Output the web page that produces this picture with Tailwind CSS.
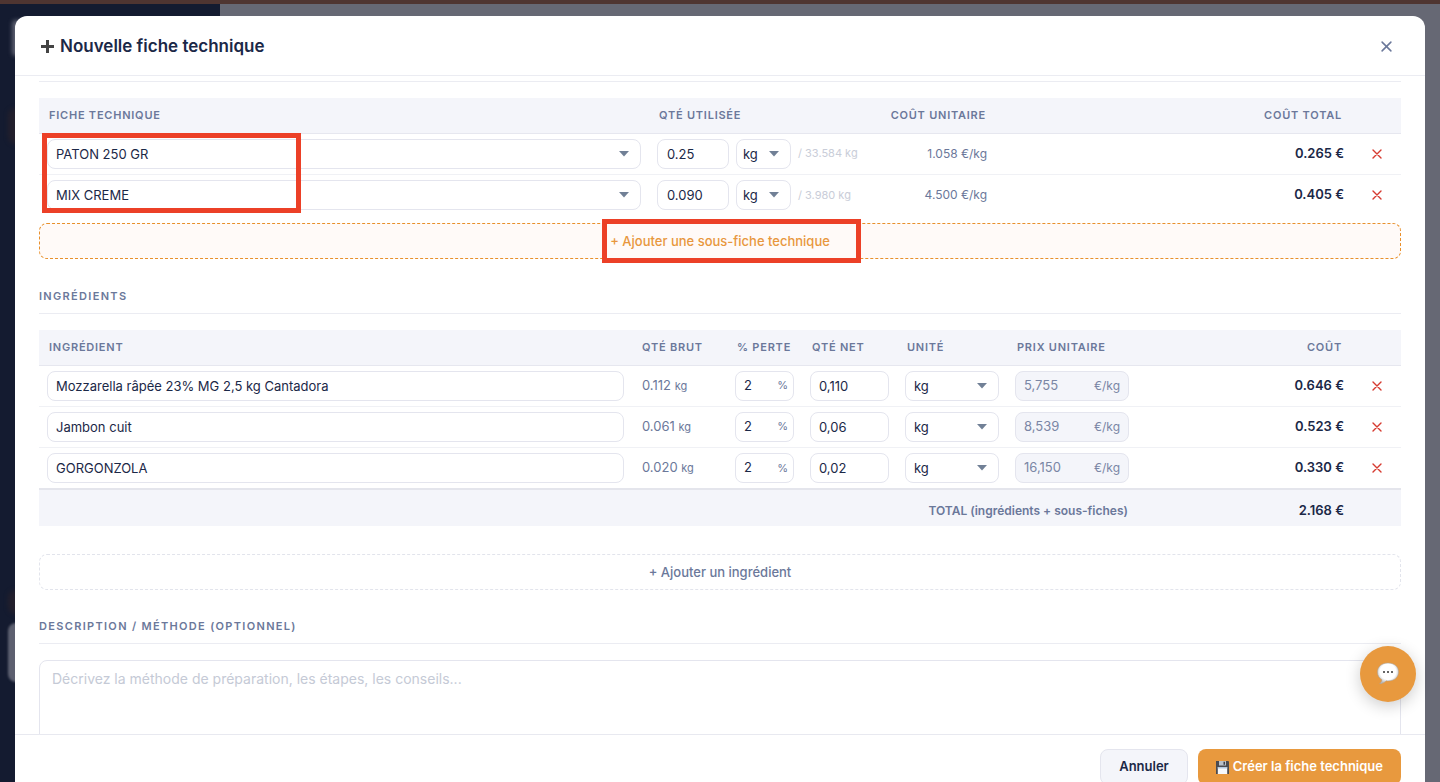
<!DOCTYPE html>
<html lang="fr">
<head>
<meta charset="utf-8">
<meta name="viewport" content="width=device-width, initial-scale=1">
<title>Nouvelle fiche technique</title>
<script src="https://cdn.jsdelivr.net/npm/@tailwindcss/browser@4"></script>
</head>
<body class="h-screen overflow-hidden bg-[#666874] font-['Inter',sans-serif] text-[13px] text-[#1b2847] antialiased">
<svg class="hidden" aria-hidden="true">
  <symbol id="caret" viewBox="0 0 10 6"><path d="M0 0h10L5 5.600z" fill="#718096"/></symbol>
  <symbol id="cross" viewBox="0 0 10 10"><path d="M1 1l8 8M9 1L1 9" fill="none" stroke="currentColor" stroke-width="1.400" stroke-linecap="round"/></symbol>
</svg>

<!-- Dimmed application behind the dialog -->
<div class="absolute inset-0 flex flex-col overflow-hidden" aria-hidden="true">
  <div class="h-1 shrink-0 bg-[#4f3531]"></div>
  <div class="flex flex-1">
    <div class="relative w-[220px] bg-[#141b30]">
      <div class="absolute left-3 top-4 h-9 w-10 rounded bg-[#5d6070] blur-[2px]"></div>
      <div class="absolute left-2 top-[104px] h-9 w-10 rounded-lg bg-[#221f2c] blur-[2px]"></div>
      <div class="absolute left-2 top-[586px] h-6 w-10 rounded-lg bg-[#221f2c] blur-[2px]"></div>
      <div class="absolute left-2 top-[619px] h-[59px] w-40 rounded-lg bg-[#5d6070] blur-[1px]"></div>
    </div>
  </div>
</div>

<div class="relative flex h-full px-[15px] pt-4">
<div role="dialog" aria-labelledby="title" class="relative flex min-w-0 flex-1 flex-col rounded-t-xl bg-white">
  <header class="flex h-[60px] shrink-0 items-center justify-between border-b border-[#ebecf2] pl-[26px] pr-8 pt-0.5">
    <h1 id="title" class="flex items-center gap-[6px] text-[17px] font-semibold">
      <svg class="size-[13px]" viewBox="0 0 13 13" aria-hidden="true"><path d="M6.500 0v13M0 6.500h13" stroke="#444" stroke-width="3"/></svg>
      Nouvelle fiche technique
    </h1>
    <button aria-label="Fermer" class="grid size-[14px] place-items-center text-[#6b789a]"><svg class="size-[11px]"><use href="#cross"/></svg></button>
  </header>

  <main class="min-h-0 flex-1 overflow-hidden px-6 pt-[5px]">
    <section class="relative border-t border-[#ebecf2] pt-4">
      <table class="w-full table-fixed border-collapse">
        <colgroup><col><col class="w-[231px]"><col class="w-[115px]"><col class="w-[357px]"><col class="w-[49px]"></colgroup>
        <thead>
          <tr class="h-[35px] border-b border-[#e6e7ef] bg-[#f4f5fa] text-[11px] tracking-[0.07em] text-[#6b789a]">
            <th class="px-[10px] text-left font-semibold">FICHE TECHNIQUE</th>
            <th class="px-[10px] text-left font-semibold">QTÉ UTILISÉE</th>
            <th class="whitespace-nowrap px-[9px] text-right font-semibold">COÛT UNITAIRE</th>
            <th class="px-[10px] text-right font-semibold">COÛT TOTAL</th>
            <th></th>
          </tr>
        </thead>
        <tbody>
          <tr class="h-[41px] border-b border-[#f0f1f5]">
            <td class="px-2"><div class="relative"><select aria-label="Fiche technique" class="block h-[30px] w-full appearance-none rounded-lg border border-[#e4e5ee] bg-white px-2 pt-0.5"><option>PATON 250 GR</option></select><svg class="pointer-events-none absolute right-3 top-3 h-[6px] w-[10px]"><use href="#caret"/></svg></div></td>
            <td class="px-2"><div class="flex items-center gap-[7px]">
              <input aria-label="Quantité utilisée" value="0.25" class="h-[30px] w-[72px] rounded-lg border border-[#e4e5ee] px-[9px]">
              <div class="relative w-[55px]"><select aria-label="Unité" class="block h-[30px] w-full appearance-none rounded-lg border border-[#e4e5ee] bg-white px-[6px] pt-0.5"><option>kg</option></select><svg class="pointer-events-none absolute right-3 top-3 h-[6px] w-[10px]"><use href="#caret"/></svg></div>
              <span class="whitespace-nowrap text-[11px] text-[#c9cdd8]">/ 33.584 kg</span></div></td>
            <td class="px-2 text-right text-xs text-[#6b789a]">1.058 €/kg</td>
            <td class="px-2 text-right font-semibold">0.265 €</td>
            <td><button aria-label="Supprimer PATON 250 GR" class="mx-auto grid size-5 place-items-center text-[#d63a30]"><svg class="size-[10px]"><use href="#cross"/></svg></button></td>
          </tr>
          <tr class="h-[41px]">
            <td class="px-2"><div class="relative"><select aria-label="Fiche technique" class="block h-[30px] w-full appearance-none rounded-lg border border-[#e4e5ee] bg-white px-2 pt-0.5"><option>MIX CREME</option></select><svg class="pointer-events-none absolute right-3 top-3 h-[6px] w-[10px]"><use href="#caret"/></svg></div></td>
            <td class="px-2"><div class="flex items-center gap-[7px]">
              <input aria-label="Quantité utilisée" value="0.090" class="h-[30px] w-[72px] rounded-lg border border-[#e4e5ee] px-[9px]">
              <div class="relative w-[55px]"><select aria-label="Unité" class="block h-[30px] w-full appearance-none rounded-lg border border-[#e4e5ee] bg-white px-[6px] pt-0.5"><option>kg</option></select><svg class="pointer-events-none absolute right-3 top-3 h-[6px] w-[10px]"><use href="#caret"/></svg></div>
              <span class="whitespace-nowrap text-[11px] text-[#c9cdd8]">/ 3.980 kg</span></div></td>
            <td class="px-2 text-right text-xs text-[#6b789a]">4.500 €/kg</td>
            <td class="px-2 text-right font-semibold">0.405 €</td>
            <td><button aria-label="Supprimer MIX CREME" class="mx-auto grid size-5 place-items-center text-[#d63a30]"><svg class="size-[10px]"><use href="#cross"/></svg></button></td>
          </tr>
        </tbody>
      </table>
      <!-- Highlight around the chosen sub-recipes -->
      <div class="pointer-events-none absolute left-[3px] top-[51px] h-[80px] w-[259px] border-[5px] border-[#ec4027]"></div>
    </section>

    <button class="relative mt-2 flex h-9 w-full items-center justify-center rounded-lg border border-dashed border-[#e8902c] bg-[#fffaf8] pt-0.5 font-medium text-[#e8973d]">
      <span>+ Ajouter une sous-fiche technique</span>
      <!-- Highlight around the button label -->
      <span class="pointer-events-none absolute left-[calc(50%-118px)] top-[-5px] h-[44px] w-[259px] border-[5px] border-[#ec4027]"></span>
    </button>

    <section class="mt-[29px]">
      <h2 class="border-b border-[#ebecf2] pb-[9px] text-[11px] leading-4 font-semibold tracking-[0.12em] text-[#6b789a]">INGRÉDIENTS</h2>
      <table class="mt-4 w-full table-fixed border-collapse">
        <colgroup><col><col class="w-[95px]"><col class="w-[75px]"><col class="w-[95px]"><col class="w-[110px]"><col class="w-[130px]"><col class="w-[215px]"><col class="w-[49px]"></colgroup>
        <thead>
          <tr class="h-[35px] border-b border-[#e6e7ef] bg-[#f4f5fa] text-left text-[11px] tracking-[0.07em] whitespace-nowrap text-[#6b789a]">
            <th class="px-[10px] font-semibold">INGRÉDIENT</th>
            <th class="px-[10px] font-semibold">QTÉ BRUT</th>
            <th class="px-[10px] font-semibold">% PERTE</th>
            <th class="px-[10px] font-semibold">QTÉ NET</th>
            <th class="px-[10px] font-semibold">UNITÉ</th>
            <th class="px-[10px] font-semibold">PRIX UNITAIRE</th>
            <th class="px-[10px] text-right font-semibold">COÛT</th>
            <th></th>
          </tr>
        </thead>
        <tbody>
          <tr class="h-[41px] border-b border-[#f0f1f5]">
            <td class="px-2"><input aria-label="Ingrédient" value="Mozzarella râpée 23% MG 2,5 kg Cantadora" class="block h-[30px] w-full rounded-lg border border-[#e4e5ee] px-2"></td>
            <td class="px-[10px] text-[#6b789a]">0.112 <span class="text-[11px]">kg</span></td>
            <td class="px-2"><label class="flex h-[30px] items-center justify-between rounded-lg border border-[#e4e5ee] pl-2 pr-[5px]"><input aria-label="% perte" value="2" class="w-6"><span class="text-[11px] text-[#6b789a]">%</span></label></td>
            <td class="px-2"><input aria-label="Quantité nette" value="0,110" class="block h-[30px] w-full rounded-lg border border-[#e4e5ee] px-2"></td>
            <td class="px-2"><div class="relative"><select aria-label="Unité" class="block h-[30px] w-full appearance-none rounded-lg border border-[#e4e5ee] bg-white px-2 pt-0.5"><option>kg</option></select><svg class="pointer-events-none absolute right-3 top-3 h-[6px] w-[10px]"><use href="#caret"/></svg></div></td>
            <td class="px-2"><label class="flex h-[30px] items-center justify-between rounded-lg border border-[#e4e5ee] bg-[#f4f5fa] px-2 text-[#7a86a5]"><input aria-label="Prix unitaire" value="5,755" readonly class="w-14"><span class="text-xs">€/kg</span></label></td>
            <td class="px-2 text-right font-semibold">0.646 €</td>
            <td><button aria-label="Supprimer Mozzarella" class="mx-auto grid size-5 place-items-center text-[#d63a30]"><svg class="size-[10px]"><use href="#cross"/></svg></button></td>
          </tr>
          <tr class="h-[41px] border-b border-[#f0f1f5]">
            <td class="px-2"><input aria-label="Ingrédient" value="Jambon cuit" class="block h-[30px] w-full rounded-lg border border-[#e4e5ee] px-2"></td>
            <td class="px-[10px] text-[#6b789a]">0.061 <span class="text-[11px]">kg</span></td>
            <td class="px-2"><label class="flex h-[30px] items-center justify-between rounded-lg border border-[#e4e5ee] pl-2 pr-[5px]"><input aria-label="% perte" value="2" class="w-6"><span class="text-[11px] text-[#6b789a]">%</span></label></td>
            <td class="px-2"><input aria-label="Quantité nette" value="0,06" class="block h-[30px] w-full rounded-lg border border-[#e4e5ee] px-2"></td>
            <td class="px-2"><div class="relative"><select aria-label="Unité" class="block h-[30px] w-full appearance-none rounded-lg border border-[#e4e5ee] bg-white px-2 pt-0.5"><option>kg</option></select><svg class="pointer-events-none absolute right-3 top-3 h-[6px] w-[10px]"><use href="#caret"/></svg></div></td>
            <td class="px-2"><label class="flex h-[30px] items-center justify-between rounded-lg border border-[#e4e5ee] bg-[#f4f5fa] px-2 text-[#7a86a5]"><input aria-label="Prix unitaire" value="8,539" readonly class="w-14"><span class="text-xs">€/kg</span></label></td>
            <td class="px-2 text-right font-semibold">0.523 €</td>
            <td><button aria-label="Supprimer Jambon cuit" class="mx-auto grid size-5 place-items-center text-[#d63a30]"><svg class="size-[10px]"><use href="#cross"/></svg></button></td>
          </tr>
          <tr class="h-[42px]">
            <td class="px-2"><input aria-label="Ingrédient" value="GORGONZOLA" class="block h-[30px] w-full rounded-lg border border-[#e4e5ee] px-2"></td>
            <td class="px-[10px] text-[#6b789a]">0.020 <span class="text-[11px]">kg</span></td>
            <td class="px-2"><label class="flex h-[30px] items-center justify-between rounded-lg border border-[#e4e5ee] pl-2 pr-[5px]"><input aria-label="% perte" value="2" class="w-6"><span class="text-[11px] text-[#6b789a]">%</span></label></td>
            <td class="px-2"><input aria-label="Quantité nette" value="0,02" class="block h-[30px] w-full rounded-lg border border-[#e4e5ee] px-2"></td>
            <td class="px-2"><div class="relative"><select aria-label="Unité" class="block h-[30px] w-full appearance-none rounded-lg border border-[#e4e5ee] bg-white px-2 pt-0.5"><option>kg</option></select><svg class="pointer-events-none absolute right-3 top-3 h-[6px] w-[10px]"><use href="#caret"/></svg></div></td>
            <td class="px-2"><label class="flex h-[30px] items-center justify-between rounded-lg border border-[#e4e5ee] bg-[#f4f5fa] px-2 text-[#7a86a5]"><input aria-label="Prix unitaire" value="16,150" readonly class="w-14"><span class="text-xs">€/kg</span></label></td>
            <td class="px-2 text-right font-semibold">0.330 €</td>
            <td><button aria-label="Supprimer GORGONZOLA" class="mx-auto grid size-5 place-items-center text-[#d63a30]"><svg class="size-[10px]"><use href="#cross"/></svg></button></td>
          </tr>
        </tbody>
        <tfoot>
          <tr class="h-[37px] border-t-2 border-[#e4e5ec] bg-[#f4f5fa]">
            <td colspan="6" class="px-[9px] pt-1.5 text-right text-xs font-semibold text-[#6b789a]">TOTAL (ingrédients + sous-fiches)</td>
            <td class="px-2 pt-1.5 text-right font-semibold">2.168 €</td>
            <td></td>
          </tr>
        </tfoot>
      </table>
    </section>

    <button class="mt-7 flex h-9 w-full items-center justify-center rounded-lg border border-dashed border-[#e2e4ec] pt-0.5 font-medium text-[#6b789a]">+ Ajouter un ingrédient</button>

    <section class="mt-7">
      <h2 class="border-b border-[#ebecf2] pb-[9px] text-[11px] leading-4 font-semibold tracking-[0.12em] text-[#6b789a]"><label for="method">DESCRIPTION / MÉTHODE (OPTIONNEL)</label></h2>
      <textarea id="method" placeholder="Décrivez la méthode de préparation, les étapes, les conseils..." class="mt-4 block h-[100px] w-full resize-none rounded-lg border border-[#e4e5ee] px-3 py-2 text-sm placeholder:text-[#c5cad6]"></textarea>
    </section>
  </main>

  <footer class="flex h-12 shrink-0 items-start justify-end gap-[10px] overflow-hidden border-t border-[#e8e9f0] px-6 pt-[14px] font-semibold">
    <button class="h-9 rounded-lg border border-[#e4e5ee] bg-[#f4f5fa] px-[18px]">Annuler</button>
    <button class="flex h-9 items-center gap-1 rounded-lg bg-[#e8993e] px-[18px] text-white">
      <svg class="size-[13px]" viewBox="0 0 13 13" aria-hidden="true"><path d="M0 0h12.500l.5.5V13H0z" fill="#4a4b50"/><path d="M3 0h7v4.500H3z" fill="#b9c0c8"/><path d="M7.500.8h1.500v3H7.500z" fill="#3d3f45"/><path d="M1.800 6h9.400v7H1.800z" fill="#f7f9fc"/><path d="M1.800 6h9.400v1.500H1.800z" fill="#b3c8de"/></svg>
      Créer la fiche technique
    </button>
  </footer>
</div>
</div>

<button aria-label="Ouvrir la discussion" class="fixed bottom-20 right-6 grid size-14 place-items-center rounded-full bg-[#e8993e] shadow-[0_4px_16px_rgba(0,0,0,0.2)]">
  <svg class="size-6" viewBox="0 0 24 24" aria-hidden="true">
    <defs><radialGradient id="bubble" cx="50%" cy="42%" r="58%"><stop offset="65%" stop-color="#fff"/><stop offset="100%" stop-color="#b9b9b9"/></radialGradient></defs>
    <path d="M12 1C5.600 1 1.500 4.900 1.500 10c0 3.500 1.700 6.200 4.500 7.700-.3 1.700-1.200 3-2.300 4 2.800-.2 4.900-1.200 6.300-3 .7.200 1.300.2 2 .2 6.400 0 10.500-3.900 10.500-9S18.400 1 12 1z" fill="url(#bubble)" stroke="#a8a29c" stroke-width=".5"/>
    <g fill="#333"><circle cx="8" cy="10" r="1"/><circle cx="12" cy="10" r="1"/><circle cx="16" cy="10" r="1"/></g>
  </svg>
</button>
</body>
</html>
